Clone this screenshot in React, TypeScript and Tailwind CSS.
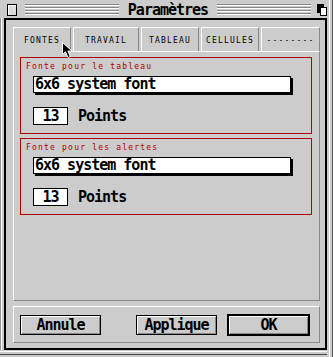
import React from 'react';

const big = "font-['DejaVu_Sans_Mono',monospace] font-bold text-[15px] tracking-[-1px] text-black";
const small = "font-['DejaVu_Sans_Mono',monospace] text-[8px] tracking-[1.2px]";

const Stripes = () => (
  <div className="flex flex-col">
    {[0, 1, 2, 3].map((i) => (
      <div key={i} className="h-[3px] border-t border-t-[#888888] border-b border-b-[#cccccc] bg-white" />
    ))}
  </div>
);

const Group = ({ label }: { label: string }) => (
  <div className="h-[77px] border border-[#aa0000]">
    <div className={`${small} text-[#aa0000] h-[8px] leading-[8px] mt-[5px] pl-[5px] whitespace-nowrap`}>{label}</div>
    <div className="pl-[12px] mt-[5px]">
      <div className={`${big} w-[258px] h-[17px] border border-black bg-white shadow-[2px_2px_0_#000] pl-[1px] leading-[15px]`}>
        6x6 system font
      </div>
      <div className="flex items-center mt-[14px]">
        <div className={`${big} w-[35px] h-[18px] border border-black bg-white text-center leading-[16px]`}>13</div>
        <span className={`${big} ml-[10px] leading-[16px]`}>Points</span>
      </div>
    </div>
  </div>
);

const tabs = [
  { label: 'FONTES', w: 'w-[58px]' },
  { label: 'TRAVAIL', w: 'w-[66px]' },
  { label: 'TABLEAU', w: 'w-[58px]' },
  { label: 'CELLULES', w: 'w-[58px]' },
  { label: '--------', w: 'w-[59px]' },
];

const App: React.FC = () => {
  return (
    <div className="w-[333px] h-[357px] bg-[#cccccc] flex overflow-hidden select-none">
      <div className="w-[327px] flex flex-col">
        {/* title bar */}
        <div className="h-[18px] flex items-start pt-[4px]">
          <div className="ml-[7px] w-[10px] h-[12px] border border-black bg-[#dddddd] shadow-[inset_1px_1px_0_#fff]" />
          <div className="ml-[8px] w-[94px]"><Stripes /></div>
          <div className={`${big} flex-1 text-center leading-[12px] whitespace-nowrap`}>Paramètres</div>
          <div className="w-[94px]"><Stripes /></div>
          <svg className="ml-[6px]" width="10" height="12" viewBox="0 0 10 12">
            <rect x="0" y="0" width="7" height="9" fill="#000" />
            <rect x="3.5" y="3.5" width="6" height="8" fill="#fff" stroke="#000" strokeWidth="1" />
          </svg>
        </div>

        {/* window body */}
        <div className="flex">
          <div className="w-[4px] flex">
            <div className="w-px bg-[#999999]" />
            <div className="w-px bg-white" />
          </div>
          <div className="relative w-[323px] h-[332px] border-2 border-black pt-[7px] pl-[7px] flex flex-col">
            <div className="h-[24px] flex gap-[2px]">
              {tabs.map((t, i) => (
                <div
                  key={t.label}
                  className={`${t.w} ${i === 0 ? 'h-[25px] relative z-10 bg-[#cccccc]' : 'h-[24px]'} border-t border-l border-t-white border-l-white border-r border-r-[#888888] flex items-start justify-center pt-[9px]`}
                >
                  <span className={`${small} leading-[8px] text-black`}>{t.label}</span>
                </div>
              ))}
            </div>

            <div className="w-[307px] h-[250px] border-t border-l border-t-white border-l-white border-r border-b border-r-[#888888] border-b-[#888888] pt-[5px] pl-[6px] pr-[7px] flex flex-col gap-[4px]">
              <Group label="Fonte pour le tableau" />
              <Group label="Fonte pour les alertes" />
            </div>

            <div className="mt-[5px] w-[307px] h-[37px] border-t border-l border-t-white border-l-white border-r border-b border-r-[#888888] border-b-[#888888] flex items-center pl-[6px]">
              <button className={`${big} w-[81px] h-[20px] border border-black bg-[#cccccc] shadow-[inset_1px_1px_0_#fff,inset_-1px_-1px_0_#888] leading-[18px]`}>
                Annule
              </button>
              <button className={`${big} ml-[35px] w-[81px] h-[20px] border border-black bg-[#cccccc] shadow-[inset_1px_1px_0_#fff,inset_-1px_-1px_0_#888] leading-[18px]`}>
                Applique
              </button>
              <button className={`${big} ml-[10px] w-[83px] h-[22px] border-2 border-black bg-[#cccccc] shadow-[inset_1px_1px_0_#fff,inset_-1px_-1px_0_#888] leading-[18px]`}>
                OK
              </button>
            </div>

            {/* mouse pointer */}
            <svg className="absolute left-[56px] top-[22px] z-20" width="12" height="17" viewBox="0 0 12 17">
              <path d="M0.5 0.5 L0.5 12.5 L3.5 9.8 L6 15.5 L8.3 14.5 L5.9 9 L10 9 Z" fill="#000" stroke="#fff" strokeWidth="1" />
            </svg>
          </div>
        </div>

        {/* bottom edge */}
        <div className="h-[7px] flex flex-col pt-[1px]">
          <div className="h-px bg-white" />
          <div className="h-px mt-[2px] bg-[#444444]" />
        </div>
      </div>

      {/* strip of the desktop at the right */}
      <div className="w-[6px] flex">
        <div className="w-[2px]" />
        <div className="w-px bg-white" />
        <div className="w-[2px]" />
        <div className="w-px bg-[#555555]" />
      </div>
    </div>
  );
};

export default App;
